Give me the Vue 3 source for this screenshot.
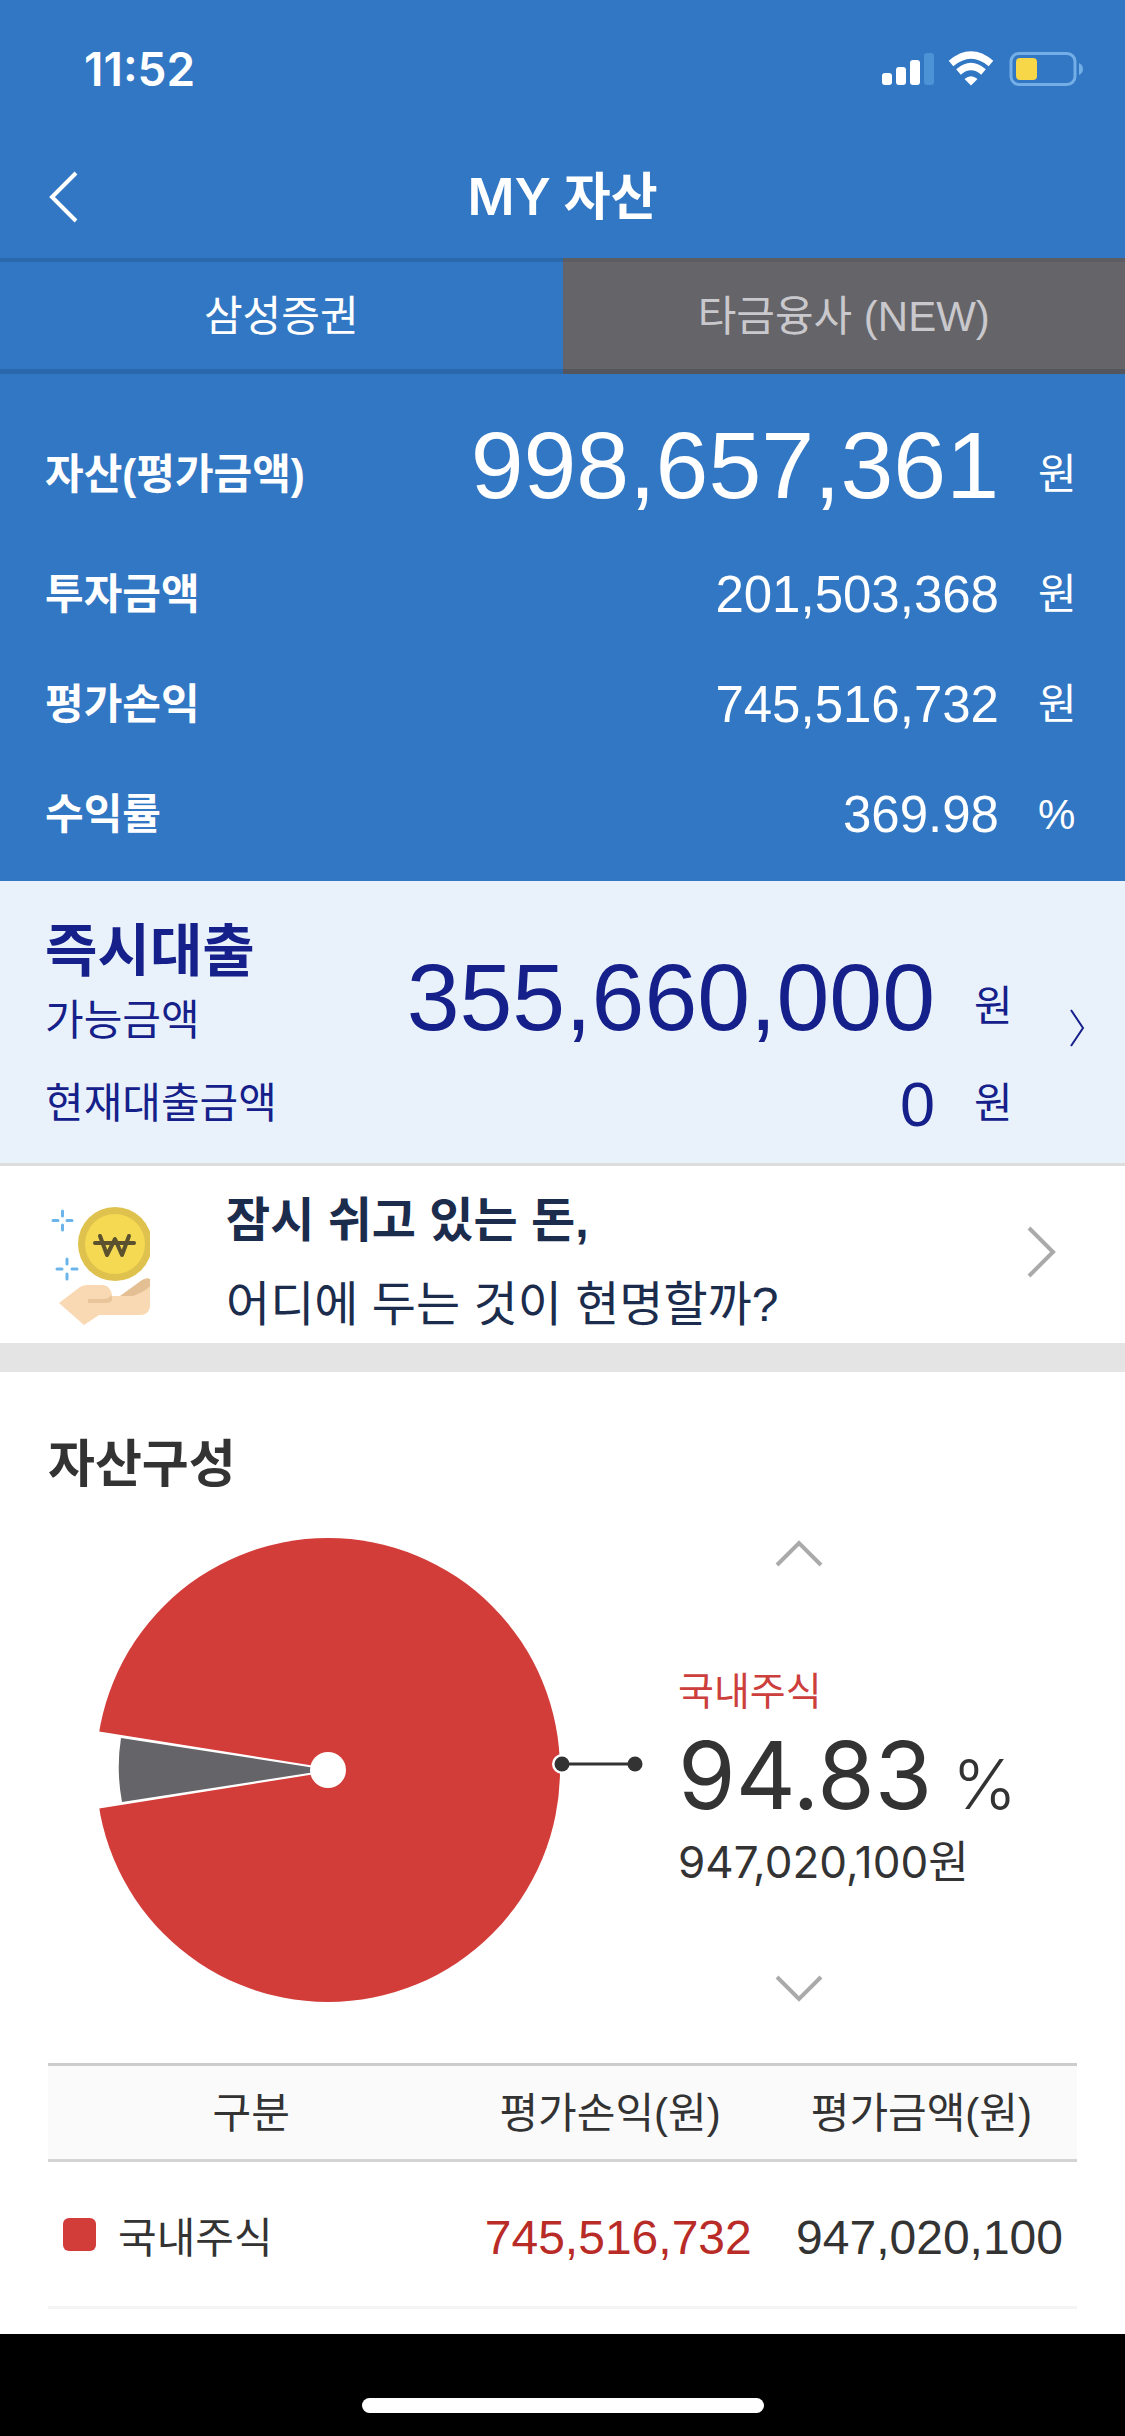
<script setup>
import { ref } from 'vue'

const tabs = ['삼성증권', '타금융사 (NEW)']
const activeTab = ref(0)

const summary = [
  { label: '자산(평가금액)', value: '998,657,361', unit: '원', main: true },
  { label: '투자금액', value: '201,503,368', unit: '원' },
  { label: '평가손익', value: '745,516,732', unit: '원' },
  { label: '수익률', value: '369.98', unit: '%' },
]

const holdings = [
  { name: '국내주식', profit: '745,516,732', amount: '947,020,100', color: '#d23c39' },
]
</script>

<template>
  <div class="page">
    <header class="top">
      <div class="status">
        <span class="time">11:52</span>
        <svg class="status-icons" width="202" height="36" viewBox="0 0 202 36" aria-hidden="true">
          <g fill="#fff">
            <rect x="1" y="22" width="10" height="12" rx="3" />
            <rect x="15" y="16" width="10" height="18" rx="3" />
            <rect x="29" y="9" width="10" height="25" rx="3" />
            <rect x="43" y="2" width="10" height="32" rx="3" fill="#4b93d4" />
            <path d="M90 34.500L83.500 28Q90 22.500 96.500 28Z" />
          </g>
          <g fill="none" stroke="#fff" stroke-width="7">
            <path d="M70 12.500Q90 -4.500 110 12.500" />
            <path d="M77.500 21Q90 10 102.500 21" />
          </g>
          <rect x="130" y="2.500" width="64" height="31" rx="8" fill="none" stroke="#74aee6" stroke-width="3" />
          <rect x="135" y="7" width="21" height="22" rx="4" fill="#f7d648" />
          <path d="M198 12Q202 14 202 18T198 24Z" fill="#74aee6" />
        </svg>
      </div>
      <nav class="nav">
        <button class="back" type="button" aria-label="뒤로">
          <svg width="32" height="54" viewBox="0 0 32 54"><path d="M29 3L5 27L29 51" fill="none" stroke="#fff" stroke-width="4" /></svg>
        </button>
        <h1>MY 자산</h1>
      </nav>
    </header>

    <div class="tabs" role="tablist">
      <button
        v-for="(tab, i) in tabs"
        :key="tab"
        type="button"
        role="tab"
        class="tab"
        :class="{ active: activeTab === i }"
        :aria-selected="activeTab === i"
        @click="activeTab = i"
      >{{ tab }}</button>
    </div>

    <section class="summary">
      <div v-for="row in summary" :key="row.label" class="row" :class="{ main: row.main }">
        <span class="label">{{ row.label }}</span>
        <span class="value">{{ row.value }}</span>
        <span class="unit">{{ row.unit }}</span>
      </div>
    </section>

    <a class="loan" href="#loan">
      <div class="loan-body">
        <div class="loan-row available">
          <div class="loan-names">
            <strong>즉시대출</strong>
            <span>가능금액</span>
          </div>
          <span class="loan-value big">355,660,000</span>
          <span class="unit">원</span>
        </div>
        <div class="loan-row">
          <span class="loan-label">현재대출금액</span>
          <span class="loan-value">0</span>
          <span class="unit">원</span>
        </div>
      </div>
      <svg width="16" height="38" viewBox="0 0 16 38" aria-hidden="true"><path d="M2 1L14 19L2 37" fill="none" stroke="#15208a" stroke-width="2" /></svg>
    </a>

    <a class="banner" href="#idle-money">
      <svg class="coin" width="105" height="130" viewBox="0 0 105 130" aria-hidden="true">
        <circle cx="70" cy="46" r="37" fill="#dfc24e" />
        <circle cx="70" cy="46" r="30" fill="#f5d952" />
        <g fill="none" stroke="#5c512e" stroke-width="4" stroke-linecap="round" stroke-linejoin="round">
          <path d="M50 45H89" />
          <path d="M55 38L62 57L70 41L77 57L84 38" />
        </g>
        <g stroke="#6bb5ea" stroke-width="3" stroke-linecap="round">
          <path d="M17.500 13V18M17.500 27V32M8 22.500H13M22 22.500H27" />
          <path d="M22 61V66M22 76V81M12 71H17M27 71H32" />
        </g>
        <path d="M14 105L35 89Q38 87 42 87H58Q66 88 67 98H84L105 84V109Q103 117 96 117H54L39 127Z" fill="#f9d9b3" />
        <path d="M75 98L97 82Q102 79 105 81V88Q101 93 88 98Z" fill="#e5bf94" />
        <path d="M43 101H58Q64 101 66 97Q70 105 60 105H43Z" fill="#e9c59b" />
      </svg>
      <p class="banner-text">
        <strong>잠시 쉬고 있는 돈,</strong>
        <span>어디에 두는 것이 현명할까?</span>
      </p>
      <svg class="banner-arrow" width="30" height="52" viewBox="0 0 30 52" aria-hidden="true"><path d="M3 2L27 26L3 50" fill="none" stroke="#aaa" stroke-width="4" /></svg>
    </a>

    <section class="portfolio">
      <h2>자산구성</h2>
      <div class="chart">
        <svg class="pie" width="548" height="466" viewBox="96 1537 548 466" role="img" aria-label="국내주식 94.83%">
          <circle cx="328" cy="1770" r="232" fill="#d23c39" />
          <path d="M90 1730L328 1768V1772L90 1810Z" fill="#fff" />
          <path d="M328 1770L121 1738Q116 1770 122 1802Z" fill="#656468" />
          <circle cx="328" cy="1770" r="18" fill="#fff" />
          <circle cx="562" cy="1764" r="10" fill="#fff" />
          <path d="M562 1764H635" stroke="#333" stroke-width="3" />
          <circle cx="562" cy="1764" r="7.500" fill="#333" />
          <circle cx="635" cy="1764" r="7.500" fill="#333" />
        </svg>
        <div class="detail">
          <button type="button" aria-label="이전 자산">
            <svg width="50" height="30" viewBox="0 0 50 30"><path d="M3 28L25 6L47 28" fill="none" stroke="#aaa" stroke-width="4" /></svg>
          </button>
          <div class="figures">
            <span class="kind">국내주식</span>
            <span class="share">94.83<small>%</small></span>
            <span class="sum">947,020,100원</span>
          </div>
          <button type="button" aria-label="다음 자산">
            <svg width="50" height="30" viewBox="0 0 50 30"><path d="M3 4L25 26L47 4" fill="none" stroke="#aaa" stroke-width="4" /></svg>
          </button>
        </div>
      </div>

      <table>
        <thead>
          <tr>
            <th class="kind-col" scope="col">구분</th>
            <th scope="col">평가손익(원)</th>
            <th scope="col">평가금액(원)</th>
          </tr>
        </thead>
        <tbody>
          <tr v-for="item in holdings" :key="item.name">
            <td>
              <span class="name"><i class="swatch" :style="{ background: item.color }"></i>{{ item.name }}</span>
            </td>
            <td class="num up">{{ item.profit }}</td>
            <td class="num">{{ item.amount }}</td>
          </tr>
        </tbody>
      </table>
    </section>

    <footer class="home"><span></span></footer>
  </div>
</template>

<style>
body {
  margin: 0;
  background: #000;
}
</style>

<style scoped>
.page {
  font-family: "Liberation Sans", "Noto Sans CJK KR", sans-serif;
  font-size: 42px;
  color: #333;
  background: #fff;
}
svg {
  display: block;
  flex: none;
}
button {
  border: 0;
  padding: 0;
  background: none;
  font: inherit;
  color: inherit;
}
a {
  color: inherit;
  text-decoration: none;
}
h1,
h2,
p {
  margin: 0;
}
.top {
  background: #3277c3;
  color: #fff;
}
.status {
  display: flex;
  justify-content: space-between;
  align-items: center;
  height: 138px;
  padding: 0 42px 0 84px;
}
.time {
  font: 600 46px/60px Inter, sans-serif;
}
.nav {
  display: grid;
  grid-template-columns: 120px 1fr 120px;
  align-items: center;
  height: 118px;
  padding-bottom: 2px;
}
.back {
  padding-left: 47px;
}
h1 {
  font: 600 51px/60px Inter, "Noto Sans CJK KR", sans-serif;
  text-align: center;
}
.tabs {
  display: flex;
}
.tab {
  flex: 1;
  height: 116px;
  padding-bottom: 6px;
  border-top: 4px solid #5c5d63;
  border-bottom: 5px solid #55565d;
  background: #656468;
  color: #c9c8cc;
}
.tab.active {
  border-color: #2a68ac;
  background: #3277c3;
  color: #fff;
}
.summary {
  display: flex;
  flex-direction: column;
  gap: 38px;
  padding: 45px 48px 30px 45px;
  background: #3277c3;
  color: #fff;
}
.row {
  display: flex;
  align-items: flex-end;
  line-height: 72px;
}
.row.main {
  margin-bottom: 10px;
}
.label {
  flex: 1;
  font-weight: 700;
}
.value {
  font-size: 51px;
}
.main .value {
  font-size: 95px;
  line-height: 92px;
}
.unit {
  width: 39px;
  margin-left: 39px;
}
.loan {
  display: flex;
  align-items: center;
  gap: 56px;
  padding: 40px 40px 29px 45px;
  border-bottom: 3px solid #ddd;
  background: #e9f2fa;
  color: #15208a;
}
.loan-body {
  flex: 1;
}
.loan-row {
  display: flex;
  align-items: center;
  line-height: 60px;
}
.loan-row.available {
  align-items: flex-end;
  margin-bottom: 31px;
}
.available .unit {
  line-height: 72px;
}
.loan-names {
  display: flex;
  flex: 1;
  flex-direction: column;
  gap: 18px;
  line-height: 44px;
}
.loan-names strong {
  font-size: 57px;
  line-height: 60px;
}
.loan-label {
  flex: 1;
}
.loan-value {
  font-size: 63px;
}
.loan-value.big {
  font-size: 95px;
  line-height: 92px;
}
.banner {
  display: flex;
  align-items: center;
  padding: 23px 69px 6px 45px;
  color: #1b2c4d;
}
.banner-text {
  display: flex;
  flex: 1;
  flex-direction: column;
  gap: 20px;
  padding-left: 76px;
  font-size: 48px;
  line-height: 64px;
}
.banner-arrow {
  margin-bottom: 22px;
}
.portfolio {
  padding: 63px 48px 25px;
  border-top: 29px solid #e4e4e4;
}
h2 {
  font-size: 51px;
  font-weight: 700;
  line-height: 60px;
}
.chart {
  display: flex;
  padding: 42px 0 60px 48px;
}
.detail {
  display: flex;
  flex: 1;
  flex-direction: column;
  justify-content: space-between;
  align-items: flex-start;
  padding-left: 34px;
}
.detail button {
  margin-left: 96px;
}
.figures {
  display: flex;
  flex-direction: column;
  padding-top: 6px;
  font-family: Inter, "Noto Sans CJK KR", sans-serif;
}
.kind {
  font-size: 39px;
  line-height: 60px;
  color: #cc3f3c;
}
.share {
  font-size: 93px;
  line-height: 108px;
}
.share small {
  margin-left: 20px;
  font-size: 69px;
  font-weight: 300;
}
.sum {
  font-size: 44px;
  line-height: 48px;
}
table {
  width: 100%;
  table-layout: fixed;
  border-collapse: separate;
  border-spacing: 0;
  border-top: 3px solid #ccc;
}
th {
  height: 87px;
  padding: 0 0 6px;
  border-bottom: 3px solid #d4d4d4;
  background: #fafafa;
  font-weight: 400;
}
.kind-col {
  width: 39.5%;
}
td {
  height: 144px;
  padding: 0;
  border-bottom: 3px solid #f4f4f4;
}
.name {
  display: flex;
  align-items: center;
  gap: 22px;
  padding-left: 15px;
}
.swatch {
  width: 33px;
  height: 33px;
  border-radius: 6px;
}
td.num {
  height: 138px;
  padding: 6px 14px 0 0;
  font-size: 48px;
  text-align: right;
}
.up {
  color: #b92b27;
}
.home {
  display: flex;
  justify-content: center;
  padding: 64px 0 24px;
  background: #000;
}
.home span {
  width: 402px;
  height: 15px;
  border-radius: 8px;
  background: #fff;
}
</style>
